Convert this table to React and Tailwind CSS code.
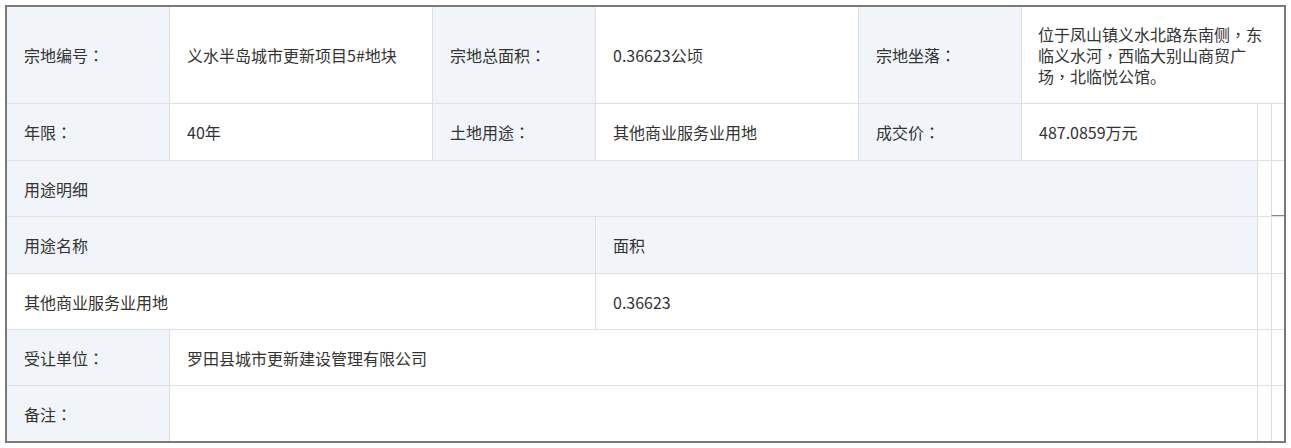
const LABEL = 'bg-[#f1f4f9]';
const FONT = "font-['Microsoft_YaHei','Noto_Sans_CJK_SC',sans-serif]";
const PUNCT = "font-['Noto_Sans_CJK_TC',sans-serif]";

// 全角标点居中显示
function P({ children }) {
  return <span className={PUNCT}>{children}</span>;
}

function Cell({ w, label, children, last }) {
  return (
    <div
      className={`${w} h-full flex items-center pl-[17px] ${label ? LABEL : 'bg-white'} ${last ? '' : 'border-r border-[#dcdfe6]'}`}
    >
      {children}
    </div>
  );
}

// narrow cells on the right side (scroll track area)
function Extra({ bottomDark }) {
  return (
    <>
      <div className="w-[14px] h-full border-l border-[#dcdfe6] bg-white" />
      <div className={`w-[13px] h-full border-l border-[#dcdfe6] bg-white ${bottomDark ? 'border-b border-b-[#888]' : ''}`} />
    </>
  );
}

function Row({ h, children, bottomDark, noBorder }) {
  return (
    <div className={`flex ${h} ${noBorder ? '' : 'border-b border-[#dcdfe6]'}`}>
      <div className="w-[1250px] h-full flex">{children}</div>
      <Extra bottomDark={bottomDark} />
    </div>
  );
}

export default function App() {
  return (
    <div className={`min-h-screen bg-white pl-[5px] pt-[5px] ${FONT}`}>
      <div className="w-[1281px] border-2 border-[#7a7a7a] text-[16px] text-[#333]">
        {/* 第一行 */}
        <div className="flex h-[97px] border-b border-[#dcdfe6]">
          <Cell w="w-[163px]" label>宗地编号<P>：</P></Cell>
          <Cell w="w-[263px]">义水半岛城市更新项目5#地块</Cell>
          <Cell w="w-[163px]" label>宗地总面积<P>：</P></Cell>
          <Cell w="w-[263px]">0.36623公顷</Cell>
          <Cell w="w-[163px]" label>宗地坐落<P>：</P></Cell>
          <div className="flex-1 h-full flex items-center pl-[16px] bg-white">
            <div className="w-[230px] leading-[21px]">
              位于凤山镇义水北路东南侧<P>，</P>东临义水河<P>，</P>西临大别山商贸广场<P>，</P>北临悦公馆。
            </div>
          </div>
        </div>

        <Row h="h-[57px]">
          <Cell w="w-[163px]" label>年限<P>：</P></Cell>
          <Cell w="w-[263px]">40年</Cell>
          <Cell w="w-[163px]" label>土地用途<P>：</P></Cell>
          <Cell w="w-[263px]">其他商业服务业用地</Cell>
          <Cell w="w-[163px]" label>成交价<P>：</P></Cell>
          <Cell w="flex-1" last>487.0859万元</Cell>
        </Row>

        <Row h="h-[56px]" bottomDark>
          <Cell w="flex-1" label last>用途明细</Cell>
        </Row>

        <Row h="h-[57px]">
          <Cell w="w-[589px]" label>用途名称</Cell>
          <Cell w="flex-1" label last>面积</Cell>
        </Row>

        <Row h="h-[56px]">
          <Cell w="w-[589px]">其他商业服务业用地</Cell>
          <Cell w="flex-1" last>0.36623</Cell>
        </Row>

        <Row h="h-[56px]">
          <Cell w="w-[163px]" label>受让单位<P>：</P></Cell>
          <Cell w="flex-1" last>罗田县城市更新建设管理有限公司</Cell>
        </Row>

        <Row h="h-[55px]" noBorder>
          <Cell w="w-[163px]" label>备注<P>：</P></Cell>
          <Cell w="flex-1" last />
        </Row>
      </div>
    </div>
  );
}
